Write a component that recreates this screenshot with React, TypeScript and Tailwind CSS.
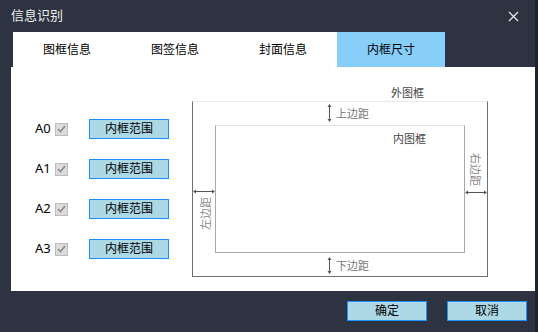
import React, { useState } from 'react';

const FONT = "font-['Noto_Sans','Noto_Sans_CJK_SC',sans-serif]";

const tabs = ['图框信息', '图签信息', '封面信息', '内框尺寸'];
const sizes = ['A0', 'A1', 'A2', 'A3'];

function VArrow({ h }: { h: number }) {
  return (
    <svg width="5" height={h} viewBox={`0 0 5 ${h}`}>
      <line x1="2.5" y1="1" x2="2.5" y2={h - 1} stroke="#555" strokeWidth="1" />
      <polygon points="2.5,0 0.5,3 4.5,3" fill="#555" />
      <polygon points={`2.5,${h} 0.5,${h - 3} 4.5,${h - 3}`} fill="#555" />
    </svg>
  );
}

function HArrow({ w }: { w: number }) {
  return (
    <svg width={w} height="5" viewBox={`0 0 ${w} 5`}>
      <line x1="1" y1="2.5" x2={w - 1} y2="2.5" stroke="#555" strokeWidth="1" />
      <polygon points="0,2.5 3,0.5 3,4.5" fill="#555" />
      <polygon points={`${w},2.5 ${w - 3},0.5 ${w - 3},4.5`} fill="#555" />
    </svg>
  );
}

// 内框尺寸示意图
function FrameDiagram() {
  return (
    <div className="relative mt-[34px] w-[296px] h-[176px] border-x border-b border-x-[#6f6f6f] border-b-[#6f6f6f] border-t border-t-[#ebebeb] text-[11px] leading-none text-[#555]">
      <span className="absolute left-[198px] top-[-15px] text-[#444]">外图框</span>

      <div className="absolute left-[22px] top-[23px] w-[250px] h-[128px] border-x border-b border-x-[#a8a8a8] border-b-[#a8a8a8] border-t border-t-[#e4e4e4]">
        <span className="absolute left-[177px] top-[7px] text-[#444]">内图框</span>
      </div>

      <div className="absolute left-[134px] top-[2px] flex">
        <VArrow h={18} />
      </div>
      <span className="absolute left-[143px] top-[6px] text-[#777]">上边距</span>

      <div className="absolute left-[134px] top-[155px] flex">
        <VArrow h={17} />
      </div>
      <span className="absolute left-[143px] top-[158px] text-[#777]">下边距</span>

      <div className="absolute left-0 top-[87px] flex">
        <HArrow w={22} />
      </div>
      <span className="absolute left-[-5px] top-[106px] w-[34px] h-[11px] text-center -rotate-90 text-[#888]">左边距</span>

      <div className="absolute left-[272px] top-[88px] flex">
        <HArrow w={22} />
      </div>
      <span className="absolute left-[265px] top-[62px] w-[34px] h-[11px] text-center rotate-90 text-[#888]">右边距</span>
    </div>
  );
}

export default function App() {
  const [active, setActive] = useState(3);

  return (
    <div className={`flex w-[538px] h-[332px] bg-[#1f232b] ${FONT}`}>
      <div className="flex flex-col w-[535px] h-[332px] bg-[#2d3341]">
        {/* Title bar */}
        <div className="flex items-center justify-between h-[32px] pl-[11px] pr-[16px]">
          <span className="text-[13px] text-[#ececec]">信息识别</span>
          <svg width="11" height="11" viewBox="0 0 11 11">
            <path d="M1 1 L10 10 M10 1 L1 10" stroke="#e8e8e8" strokeWidth="1.3" />
          </svg>
        </div>

        {/* Tabs */}
        <div className="flex ml-[13px] h-[35px]">
          {tabs.map((t, i) => (
            <button
              key={t}
              onClick={() => setActive(i)}
              className={`w-[108px] h-full flex items-center justify-center text-[12px] text-black ${
                i === active ? 'bg-[#87cefa]' : 'bg-white'
              }`}
            >
              {t}
            </button>
          ))}
        </div>

        {/* Content */}
        <div className="flex ml-[11px] w-[524px] h-[224px] bg-white">
          <div className="w-[181px] pl-[24px] pt-[52px] flex flex-col gap-[20px]">
            {sizes.map((s) => (
              <div key={s} className="flex items-center h-[20px]">
                <span className="w-[20px] text-[13px] text-black">{s}</span>
                <span className="flex items-center justify-center w-[13px] h-[13px] bg-[#dcdcdc] border border-[#bcbcbc]">
                  <svg width="9" height="8" viewBox="0 0 9 8">
                    <path d="M1 4 L3.5 6.5 L8 1" fill="none" stroke="#8a8a8a" strokeWidth="1.6" />
                  </svg>
                </span>
                <button className="ml-[21px] w-[80px] h-[20px] bg-[#add8e6] border border-[#1e90ff] text-[12px] text-black flex items-center justify-center">
                  内框范围
                </button>
              </div>
            ))}
          </div>
          <FrameDiagram />
        </div>

        {/* Footer */}
        <div className="flex justify-end gap-[20px] mt-[10px] pr-[8px]">
          <button className="w-[80px] h-[20px] bg-[#add8e6] border border-[#1e90ff] text-[12px] text-black flex items-center justify-center">
            确定
          </button>
          <button className="w-[80px] h-[20px] bg-[#add8e6] border border-[#1e90ff] text-[12px] text-black flex items-center justify-center">
            取消
          </button>
        </div>
      </div>
    </div>
  );
}
